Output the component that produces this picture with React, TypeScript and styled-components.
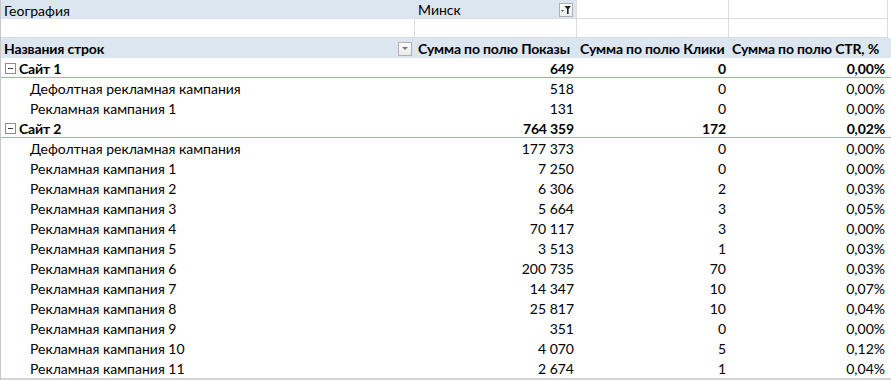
import React from 'react';
import styled, { createGlobalStyle } from 'styled-components';

const GlobalStyle = createGlobalStyle`
  body {
    margin: 0;
    padding: 0;
    background: #ffffff;
    font-family: Lato, 'Open Sans', sans-serif;
    font-size: 14px;
    color: #000;
    overflow: hidden;
  }
`;

const COLS = '414px 162px 152px 159px 3px';

// Whole sheet area
const Sheet = styled.div`
  width: 891px;
  height: 380px;
  border-left: 1px solid #c6c6c6;
  box-sizing: border-box;
  overflow: hidden;
`;

const Rows = styled.div`
  border-bottom: 2px solid #d4d4d4;
`;

const Row = styled.div<{ $h?: number; $fill?: boolean; $line?: boolean; $bold?: boolean }>`
  display: grid;
  grid-template-columns: ${COLS};
  height: ${(p) => p.$h ?? 20}px;
  box-sizing: border-box;
  background: ${(p) => (p.$fill ? '#dce6f1' : 'transparent')};
  border-bottom: ${(p) => (p.$line ? '1px solid #95b3d7' : 'none')};
  font-weight: ${(p) => (p.$bold ? 700 : 400)};
  letter-spacing: ${(p) => (p.$bold ? '-0.15px' : '0')};
`;

const Cell = styled.div<{ $right?: boolean; $indent?: number; $grid?: boolean; $fill?: boolean }>`
  display: flex;
  align-items: center;
  justify-content: ${(p) => (p.$right ? 'flex-end' : 'flex-start')};
  padding: 1px ${(p) => (p.$right ? 3 : 2)}px 0 ${(p) => p.$indent ?? 3}px;
  box-sizing: border-box;
  white-space: nowrap;
  overflow: hidden;
  background: ${(p) => (p.$fill ? '#dce6f1' : 'transparent')};
  border-right: ${(p) => (p.$grid ? '1px solid #dadcdd' : 'none')};
  border-bottom: ${(p) => (p.$grid ? '1px solid #dadcdd' : 'none')};
`;

const Spacer = styled.span`
  flex: 1;
`;

const Toggle = styled.span`
  display: inline-flex;
  align-items: center;
  justify-content: center;
  width: 9px;
  height: 9px;
  border: 1px solid #8c8c8c;
  background: #fff;
  margin-right: 3px;
  margin-left: 1px;

  &::after {
    content: '';
    width: 5px;
    height: 1px;
    background: #3a3a3a;
  }
`;

const DropButton = styled.span`
  display: inline-flex;
  align-items: center;
  justify-content: center;
  width: 14px;
  height: 14px;
  box-sizing: border-box;
  border: 1px solid #b0b0b0;
  background: linear-gradient(#ffffff, #eaeaea);
  margin-right: 1px;
`;

const FilterIcon = () => (
  <DropButton>
    <svg width="12" height="12" viewBox="0 0 12 12">
      <path d="M1 6 L4 6 L2.5 8 Z" fill="#555" />
      <path d="M4.5 2 L11 2 L8.6 5 L8.6 10 L7 10 L7 5 Z" fill="#222" />
    </svg>
  </DropButton>
);

const ArrowIcon = () => (
  <DropButton>
    <svg width="8" height="5" viewBox="0 0 8 5">
      <path d="M1 1 L7 1 L4 4 Z" fill="#7a7a7a" />
    </svg>
  </DropButton>
);

type Item = { name: string; shows: string; clicks: string; ctr: string };
type Site = { name: string; shows: string; clicks: string; ctr: string; items: Item[] };

const sites: Site[] = [
  {
    name: 'Сайт 1',
    shows: '649',
    clicks: '0',
    ctr: '0,00%',
    items: [
      { name: 'Дефолтная рекламная кампания', shows: '518', clicks: '0', ctr: '0,00%' },
      { name: 'Рекламная кампания 1', shows: '131', clicks: '0', ctr: '0,00%' },
    ],
  },
  {
    name: 'Сайт 2',
    shows: '764 359',
    clicks: '172',
    ctr: '0,02%',
    items: [
      { name: 'Дефолтная рекламная кампания', shows: '177 373', clicks: '0', ctr: '0,00%' },
      { name: 'Рекламная кампания 1', shows: '7 250', clicks: '0', ctr: '0,00%' },
      { name: 'Рекламная кампания 2', shows: '6 306', clicks: '2', ctr: '0,03%' },
      { name: 'Рекламная кампания 3', shows: '5 664', clicks: '3', ctr: '0,05%' },
      { name: 'Рекламная кампания 4', shows: '70 117', clicks: '3', ctr: '0,00%' },
      { name: 'Рекламная кампания 5', shows: '3 513', clicks: '1', ctr: '0,03%' },
      { name: 'Рекламная кампания 6', shows: '200 735', clicks: '70', ctr: '0,03%' },
      { name: 'Рекламная кампания 7', shows: '14 347', clicks: '10', ctr: '0,07%' },
      { name: 'Рекламная кампания 8', shows: '25 817', clicks: '10', ctr: '0,04%' },
      { name: 'Рекламная кампания 9', shows: '351', clicks: '0', ctr: '0,00%' },
      { name: 'Рекламная кампания 10', shows: '4 070', clicks: '5', ctr: '0,12%' },
      { name: 'Рекламная кампания 11', shows: '2 674', clicks: '1', ctr: '0,04%' },
    ],
  },
];

function App() {
  return (
    <>
      <GlobalStyle />
      <Sheet>
        <Rows>
          <Row $h={19}>
            <Cell $fill>География</Cell>
            <Cell $fill $grid>
              Минск
              <Spacer />
              <FilterIcon />
            </Cell>
            <Cell $grid />
            <Cell $grid />
            <Cell />
          </Row>
          <Row $h={19}>
            <Cell $grid />
            <Cell $grid />
            <Cell $grid />
            <Cell $grid />
            <Cell />
          </Row>
          <Row $fill $bold>
            <Cell>
              Названия строк
              <Spacer />
              <ArrowIcon />
            </Cell>
            <Cell>Сумма по полю Показы</Cell>
            <Cell>Сумма по полю Клики</Cell>
            <Cell>Сумма по полю CTR, %</Cell>
            <Cell />
          </Row>
          {sites.map((s) => (
            <React.Fragment key={s.name}>
              <Row $bold $line>
                <Cell $indent={3}>
                  <Toggle />
                  {s.name}
                </Cell>
                <Cell $right>{s.shows}</Cell>
                <Cell $right>{s.clicks}</Cell>
                <Cell $right>{s.ctr}</Cell>
                <Cell />
              </Row>
              {s.items.map((it) => (
                <Row key={it.name}>
                  <Cell $indent={29}>{it.name}</Cell>
                  <Cell $right>{it.shows}</Cell>
                  <Cell $right>{it.clicks}</Cell>
                  <Cell $right>{it.ctr}</Cell>
                  <Cell />
                </Row>
              ))}
            </React.Fragment>
          ))}
        </Rows>
      </Sheet>
    </>
  );
}

export default App;
